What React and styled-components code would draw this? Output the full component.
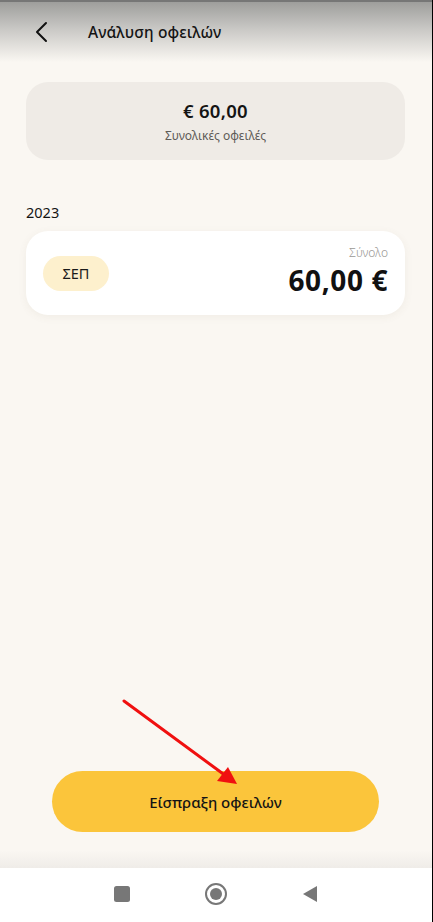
import React from 'react';
import styled, { createGlobalStyle } from 'styled-components';

const GlobalStyle = createGlobalStyle`
  html, body {
    margin: 0;
    padding: 0;
    background: #faf7f2;
  }
  body {
    font-family: "Noto Sans", "Open Sans", sans-serif;
    color: #141414;
  }
`;

const Screen = styled.div`
  position: relative;
  width: 432px;
  height: 922px;
  border-right: 1px solid #000;
  background: #faf7f2;
  display: flex;
  flex-direction: column;
  overflow: hidden;
`;

const Header = styled.header`
  height: 62px;
  flex-shrink: 0;
  display: flex;
  align-items: center;
  gap: 38px;
  padding: 0 0 0 34px;
  border-top: 2px solid #767676;
  box-sizing: border-box;
  background: linear-gradient(to bottom, #9e9e9c 0%, #c9c8c5 45%, #faf7f2 100%);
`;

const BackButton = styled.button`
  border: 0;
  background: none;
  padding: 0;
  width: 16px;
  height: 22px;
  display: flex;
  cursor: pointer;
`;

const Title = styled.h1`
  margin: 0;
  font-size: 15.5px;
  font-weight: 500;
  color: #141414;
  letter-spacing: 0.1px;
`;

const Content = styled.main`
  flex: 1;
  display: flex;
  flex-direction: column;
  padding: 20px 27px 0 26px;
`;

const SummaryCard = styled.section`
  height: 78px;
  border-radius: 22px;
  background: #efebe6;
  display: flex;
  flex-direction: column;
  align-items: center;
  justify-content: center;
  gap: 4px;
`;

const SummaryAmount = styled.div`
  font-size: 18.5px;
  font-weight: 650;
  color: #141414;
  letter-spacing: 0.3px;
`;

const SummaryLabel = styled.div`
  font-size: 12px;
  color: #5f5c58;
`;

const YearLabel = styled.div`
  margin-top: 42px;
  font-size: 14.5px;
  font-weight: 450;
  color: #141414;
`;

const MonthCard = styled.div`
  margin-top: 9px;
  height: 84px;
  border-radius: 22px;
  background: #fff;
  box-shadow: 0 2px 8px rgba(120, 100, 70, 0.07);
  display: flex;
  align-items: center;
  justify-content: space-between;
  padding: 0 17px;
`;

const MonthChip = styled.span`
  width: 66px;
  height: 35px;
  border-radius: 18px;
  background: #fdf0cd;
  display: flex;
  align-items: center;
  justify-content: center;
  font-size: 14.5px;
  font-weight: 450;
  color: #1a1a1a;
`;

const Totals = styled.div`
  display: flex;
  flex-direction: column;
  align-items: flex-end;
  padding-bottom: 4px;
`;

const TotalLabel = styled.span`
  font-size: 12px;
  line-height: 16px;
  color: #9a9894;
  font-weight: 300;
`;

const TotalValue = styled.span`
  margin-top: 2px;
  font-size: 28px;
  font-weight: 700;
  color: #111;
  line-height: 34px;
  letter-spacing: 0.6px;
`;

const Footer = styled.div`
  flex-shrink: 0;
  padding: 0 53px 0 52px;
  height: 97px;
  background: linear-gradient(to bottom, #faf7f2 0%, #faf7f2 82%, #efece8 100%);
`;

const CollectButton = styled.button`
  width: 100%;
  height: 61px;
  border: 0;
  border-radius: 31px;
  background: #fbc53b;
  font-family: inherit;
  font-size: 15px;
  font-weight: 500;
  color: #141414;
  cursor: pointer;
`;

const NavBar = styled.nav`
  height: 52px;
  flex-shrink: 0;
  background: #fff;
  display: flex;
  align-items: center;
  justify-content: center;
  gap: 72px;
  padding-bottom: 2px;
`;

const NavIcon = styled.svg`
  width: ${p => p.$size || 20}px;
  height: ${p => p.$size || 20}px;
  display: block;
`;

const ArrowOverlay = styled.svg`
  position: absolute;
  left: 0;
  top: 0;
  pointer-events: none;
`;

export default function App() {
  return (
    <>
      <GlobalStyle />
      <Screen>
        <Header>
          <BackButton aria-label="back">
            <svg width="16" height="22" viewBox="0 0 16 22">
              <path d="M12 2 L3 11 L12 20" fill="none" stroke="#111" strokeWidth="2" strokeLinecap="round" strokeLinejoin="round" />
            </svg>
          </BackButton>
          <Title>Ανάλυση οφειλών</Title>
        </Header>

        <Content>
          <SummaryCard>
            <SummaryAmount>€ 60,00</SummaryAmount>
            <SummaryLabel>Συνολικές οφειλές</SummaryLabel>
          </SummaryCard>

          <YearLabel>2023</YearLabel>
          <MonthCard>
            <MonthChip>ΣΕΠ</MonthChip>
            <Totals>
              <TotalLabel>Σύνολο</TotalLabel>
              <TotalValue>60,00 €</TotalValue>
            </Totals>
          </MonthCard>
        </Content>

        <Footer>
          <CollectButton>Είσπραξη οφειλών</CollectButton>
        </Footer>

        <NavBar>
          <NavIcon viewBox="0 0 20 20">
            <rect x="2" y="2" width="16" height="16" rx="2.5" fill="#777" />
          </NavIcon>
          <NavIcon viewBox="0 0 24 24" $size={24}>
            <circle cx="12" cy="12" r="10" fill="none" stroke="#777" strokeWidth="2" />
            <circle cx="12" cy="12" r="6" fill="#777" />
          </NavIcon>
          <NavIcon viewBox="0 0 20 20">
            <path d="M17 2 L17 18 L3 10 Z" fill="#777" />
          </NavIcon>
        </NavBar>

        <ArrowOverlay width="432" height="922" viewBox="0 0 432 922">
          <line x1="124" y1="701" x2="226" y2="776" stroke="#f01010" strokeWidth="3" strokeLinecap="round" />
          <path d="M237 784 L217 781 L228 767 Z" fill="#f01010" />
        </ArrowOverlay>
      </Screen>
    </>
  );
}
